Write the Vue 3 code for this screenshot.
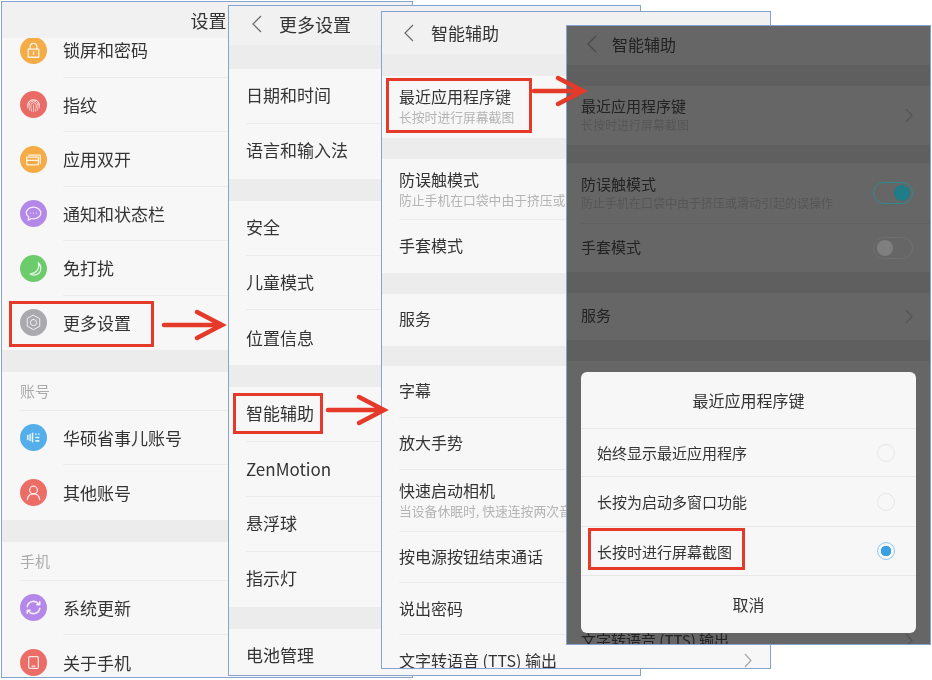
<script setup>
const ICONS = {
  lock: { c: '#f5ab46', d: ['M8.500 12.500h11v8.500h-11z', 'M10.500 12.500V10a3.500 3.500 0 0 1 7 0v2.500', 'M14 15.500v2.500'] },
  finger: { c: '#ea6a66', w: 0.8, d: ['M8 15a6 6 0 0 1 12 0', 'M8 17.500c0-7 1-8 6-8s6 1 6 8', 'M10 20c-.5-2-.5-4-.5-5a4.500 4.500 0 0 1 9 0c0 1 0 3-.5 5', 'M12 21c-.5-2-.8-4-.8-6a2.800 2.800 0 0 1 5.600 0c0 2-.3 4-.8 6', 'M14 21.500v-7'] },
  dual: { c: '#f5ab46', d: ['M9 9.500h12v8.500', 'M7 11.500h12v8H7z', 'M7 15h12'] },
  chat: { c: '#b388e8', d: ['M14 7.500c4.400 0 7.500 2.700 7.500 6s-3.100 6-7.500 6c-.8 0-1.500-.1-2.200-.3L8.500 21l.6-3.500c-1.600-1-2.600-2.500-2.600-4 0-3.300 3.100-6 7.500-6z', 'M10.800 13.500h.01', 'M14 13.500h.01', 'M17.200 13.500h.01'] },
  moon: { c: '#6ccb6b', d: ['M19 8c1.500 5-1 11-8.500 11.500 3 2.500 10.500 1.500 11-5 .2-2.500-.9-5-2.500-6.500z'] },
  gear: { c: '#a9a9ae', w: 1, d: ['M14 6.500l6.500 3.700v7.600L14 21.500l-6.500-3.700v-7.600z', 'M14 10.800a3.200 3.200 0 1 1 0 6.400 3.200 3.200 0 0 1 0-6.400z'] },
  horn: { c: '#53aeea', w: 1.6, d: ['M8 12v4', 'M10.500 11v6', 'M13 9.500v9', 'M16.500 10.500h.01', 'M19.500 10.500h.01', 'M16.500 14h3', 'M16.500 17.500h3'] },
  person: { c: '#ec6d66', d: ['M14 7.500a4 4 0 1 1 0 8 4 4 0 0 1 0-8z', 'M7.500 21.500c.6-3.600 3-6 6.500-6s5.900 2.400 6.500 6'] },
  sync: { c: '#b388e8', w: 1.6, d: ['M7.500 13a6.700 6.700 0 0 1 12-2.500', 'M20.500 8v3h-3', 'M20.500 15a6.700 6.700 0 0 1-12 2.500', 'M7.500 20v-3h3'] },
  phone: { c: '#ec6d66', d: ['M10 8h8a1 1 0 0 1 1 1v10a1 1 0 0 1-1 1h-8a1 1 0 0 1-1-1V9a1 1 0 0 1 1-1z', 'M12.500 17.700h3'] }
}

const gap = (h) => ({ gap: h })
const row = (t, h, extra = {}) => ({ t, h, ...extra })
const SUB_A = '长按时进行屏幕截图'
const SUB_B = '防止手机在口袋中由于挤压或滑动引起的误操作'

const windows = [
  {
    id: 'w1', title: '设置', items: [
      row('锁屏和密码', 54.5, { i: 'lock', d: 1 }), row('指纹', 54.5, { i: 'finger', d: 1 }),
      row('应用双开', 54.5, { i: 'dual', d: 1 }), row('通知和状态栏', 54.5, { i: 'chat', d: 1 }),
      row('免打扰', 54.5, { i: 'moon', d: 1 }), row('更多设置', 54, { i: 'gear' }),
      gap(22), { sec: '账号', h: 39 },
      row('华硕省事儿账号', 54.5, { i: 'horn', d: 1 }), row('其他账号', 54.5, { i: 'person' }),
      gap(22), { sec: '手机', h: 39 },
      row('系统更新', 54.5, { i: 'sync', d: 1 }), row('关于手机', 54.5, { i: 'phone' })
    ]
  },
  {
    id: 'w2', title: '更多设置', back: 1, items: [
      gap(24), row('日期和时间', 55, { d: 1, up: 2 }), row('语言和输入法', 55, { up: 2 }),
      gap(22), row('安全', 54.700, { d: 1, up: 1 }), row('儿童模式', 54.700, { d: 1, up: 1 }), row('位置信息', 54.600),
      gap(22), row('智能辅助', 55, { d: 1, up: 1 }), row('ZenMotion', 55, { d: 1 }), row('悬浮球', 55, { d: 1, up: 1 }), row('指示灯', 55, { up: 2 }),
      gap(22), row('电池管理', 55, { up: 2 })
    ]
  },
  {
    id: 'w3', title: '智能辅助', back: 1, items: [
      gap(22), row('最近应用程序键', 62, { s: SUB_A, up: 1 }),
      gap(21), row('防误触模式', 61, { s: SUB_B, d: 1 }), row('手套模式', 53, { up: 1 }),
      gap(21), row('服务', 52, { up: 2 }),
      gap(20), row('字幕', 52, { d: 1, up: 1 }), row('放大手势', 52, { d: 1, up: 1 }),
      row('快速启动相机', 62, { s: '当设备休眠时, 快速连按两次音量键启动相机', d: 1 }),
      row('按电源按钮结束通话', 51, { d: 1, up: 1 }), row('说出密码', 52, { d: 1 }),
      row('文字转语音 (TTS) 输出', 50, { more: 1 })
    ]
  },
  {
    id: 'w4', title: '智能辅助', back: 1, items: [
      gap(21), row('最近应用程序键', 59, { s: SUB_A, more: 1, up: 1 }),
      gap(18), row('防误触模式', 61, { s: SUB_B, sw: 'on', d: 1 }), row('手套模式', 48, { sw: 'off', up: 1 }),
      gap(21), row('服务', 47, { more: 1, up: 2 }),
      gap(21), { h: 255 }, row('文字转语音 (TTS) 输出', 48, { more: 1 })
    ]
  }
]

const options = [
  { t: '始终显示最近应用程序', h: 48 },
  { t: '长按为启动多窗口功能', h: 50 },
  { t: '长按时进行屏幕截图', h: 49, on: 1 }
]

const arrows = [
  { id: 'a1', x: 162, y: 325, len: 63 },
  { id: 'a2', x: 326, y: 410, len: 61 },
  { id: 'a3', x: 532, y: 91, len: 54 }
]
</script>

<template>
  <div class="stage">
    <section v-for="w in windows" :key="w.id" class="win" :class="w.id">
      <header class="head">
        <svg v-if="w.back" class="back" viewBox="0 0 10 18" width="10" height="18">
          <polyline points="9,1 1,9 9,17" />
        </svg>
        <h1 class="title">{{ w.title }}</h1>
      </header>
      <div class="list">
        <template v-for="(it, n) in w.items" :key="n">
          <div v-if="it.gap" class="gap" :style="{ height: it.gap + 'px' }"></div>
          <div v-else-if="it.sec" class="sec" :style="{ height: it.h + 'px' }">{{ it.sec }}</div>
          <div v-else-if="!it.t" class="blank" :style="{ height: it.h + 'px' }"></div>
          <div v-else class="row" :style="{ height: it.h + 'px' }">
            <svg v-if="it.i" class="ico" viewBox="0 0 28 28" width="27" height="27">
              <circle cx="14" cy="14" r="14" :fill="ICONS[it.i].c" />
              <path
                v-for="(p, k) in ICONS[it.i].d"
                :key="k"
                :d="p"
                fill="none"
                stroke="#fff"
                stroke-opacity=".85"
                stroke-linecap="round"
                stroke-linejoin="round"
                :stroke-width="ICONS[it.i].w || 1.3"
              />
            </svg>
            <div class="body" :class="{ line: it.d }">
              <div class="txt" :class="it.up ? 'up' + it.up : ''">
                <div class="name">{{ it.t }}</div>
                <div v-if="it.s" class="sub">{{ it.s }}</div>
              </div>
              <svg v-if="it.more" class="more" viewBox="0 0 8 15" width="8" height="15">
                <polyline points="1,1 7,7.500 1,14" />
              </svg>
              <span v-if="it.sw" class="sw" :class="it.sw"><i class="knob"></i></span>
            </div>
          </div>
        </template>
      </div>

      <div v-if="w.id === 'w4'" class="dialog">
        <div class="dlg-title">最近应用程序键</div>
        <div v-for="o in options" :key="o.t" class="opt" :style="{ height: o.h + 'px' }">
          <span>{{ o.t }}</span>
          <i class="radio" :class="{ on: o.on }"></i>
        </div>
        <div class="cancel">取消</div>
      </div>
    </section>

    <div class="mark m1"></div>
    <div class="mark m2"></div>
    <div class="mark m3"></div>
    <div class="mark m4"></div>

    <svg
      v-for="a in arrows"
      :key="a.id"
      class="arrow"
      :style="{ left: a.x + 'px', top: a.y - 16 + 'px' }"
      :width="a.len"
      height="32"
      :viewBox="`0 0 ${a.len} 32`"
    >
      <path :d="`M2 16H${a.len - 4}M${a.len - 28} 3L${a.len - 3} 16L${a.len - 28} 29`" />
    </svg>
  </div>
</template>

<style scoped>
.stage {
  position: relative;
  width: 932px;
  height: 680px;
  overflow: hidden;
  background: #fff;
  font-family: "Noto Sans CJK SC", "Noto Sans", sans-serif;
  color: #343434;
  filter: blur(0.5px);
}
.win {
  position: absolute;
  box-sizing: border-box;
  border: 1px solid #86a3cf;
  background: #f7f7f7;
  overflow: hidden;
}
.w1 { left: 1px; top: 1px; width: 412px; height: 677px; z-index: 1; }
.w2 { left: 228px; top: 5px; width: 413px; height: 671px; z-index: 2; }
.w3 { left: 381px; top: 11px; width: 390px; height: 658px; z-index: 3; }
.w4 { left: 566px; top: 25px; width: 365px; height: 620px; z-index: 4; background: #666; color: #222; }

.head {
  position: relative;
  z-index: 1;
  display: flex;
  align-items: center;
  box-sizing: border-box;
  background: #f1f1f1;
}
.w1 .head { height: 36px; justify-content: center; }
.w2 .head { height: 39px; padding-left: 23px; padding-bottom: 4px; }
.w3 .head { height: 42px; padding-left: 22px; }
.w4 .head { height: 39px; padding-left: 20px; padding-bottom: 3px; background: #666; }
.back { flex: none; margin-right: 17px; }
.w4 .back { margin-right: 15px; }
.back polyline, .more polyline { fill: none; stroke: #6a6a6a; stroke-width: 1.2; }
.w3 .more polyline { stroke: #a6a6a6; }
.w4 .back polyline { stroke: #4a4a4a; }
.w4 .more polyline { stroke: #555; }
.title { margin: 0; font-size: 18px; font-weight: 400; line-height: 24px; white-space: nowrap; }
.w1 .title { padding-left: 3px; }
.w3 .title { font-size: 17px; }
.w4 .title { font-size: 16px; }

.w1 .list { margin-top: -15px; }
.gap { background: #ececec; }
.w4 .gap { background: #5f5f5f; }
.sec {
  box-sizing: border-box;
  margin-left: 18px;
  display: flex;
  align-items: center;
  font-size: 15px;
  color: #ababab;
  border-bottom: 1px solid #ececec;
}
.row { display: flex; align-items: stretch; box-sizing: border-box; padding-left: 17px; }
.w1 .row { padding-left: 18px; }
.w4 .row { padding-left: 14px; }
.ico { flex: none; align-self: center; margin-right: 16px; }
.body {
  flex: 1;
  min-width: 0;
  display: flex;
  align-items: center;
  justify-content: space-between;
  box-sizing: border-box;
}
.body.line { border-bottom: 1px solid #ececec; }
.w4 .body.line { border-bottom-color: #606060; }
.txt { min-width: 0; white-space: nowrap; }
.txt.up1 { margin-bottom: 2px; }
.txt.up2 { margin-bottom: 4px; }
.name { font-size: 17px; line-height: 21px; }
.w3 .name { font-size: 16px; }
.w4 .name { font-size: 15px; line-height: 20px; }
.sub { font-size: 12.800px; line-height: 20px; color: #b4b4b4; }
.w4 .sub { font-size: 12px; line-height: 18px; color: #565656; }
.more { flex: none; margin-right: 18px; }
.w4 .more { margin-right: 17px; }

.sw {
  flex: none;
  box-sizing: border-box;
  width: 40px;
  height: 22px;
  margin-right: 17px;
  border-radius: 11px;
  border: 1px solid #6f6f6f;
  display: flex;
  align-items: center;
  padding: 0 3px;
}
.sw.on { border: 1.5px solid #2f8a90; justify-content: flex-end; padding: 0 2px; }
.knob { width: 16px; height: 16px; border-radius: 50%; background: #7f7f7f; }
.sw.on .knob { background: #1f7c88; }

.dialog {
  position: absolute;
  left: 14px;
  top: 346px;
  width: 335px;
  height: 261px;
  background: #f7f7f7;
  border-radius: 6px;
  color: #343434;
  display: flex;
  flex-direction: column;
}
.dlg-title {
  flex: none;
  height: 57px;
  box-sizing: border-box;
  display: flex;
  align-items: center;
  justify-content: center;
  font-size: 16px;
  border-bottom: 1px solid #e8e8e8;
}
.opt {
  flex: none;
  box-sizing: border-box;
  display: flex;
  align-items: center;
  justify-content: space-between;
  padding: 0 21px 0 16px;
  font-size: 15px;
  border-bottom: 1px solid #e8e8e8;
}
.radio {
  box-sizing: border-box;
  width: 18px;
  height: 18px;
  border-radius: 50%;
  border: 1.5px solid #e6e6e6;
}
.radio.on { border-color: #8fcbee; background: radial-gradient(circle, #3aa0e4 0 5px, #f7f7f7 5.500px); }
.cancel {
  flex: 1;
  display: flex;
  align-items: center;
  justify-content: center;
  padding-bottom: 2px;
  font-size: 16px;
}

.mark { position: absolute; z-index: 5; box-sizing: border-box; border: 3px solid #e5392a; }
.m1 { left: 9px; top: 301px; width: 145px; height: 46px; }
.m2 { left: 233px; top: 393px; width: 90px; height: 41px; }
.m3 { left: 386px; top: 78px; width: 146px; height: 55px; }
.m4 { left: 588px; top: 528px; width: 157px; height: 42px; }

.arrow { position: absolute; z-index: 5; overflow: visible; }
.arrow path {
  fill: none;
  stroke: #e5392a;
  stroke-width: 4.500;
  stroke-linecap: round;
  stroke-linejoin: miter;
}
</style>
